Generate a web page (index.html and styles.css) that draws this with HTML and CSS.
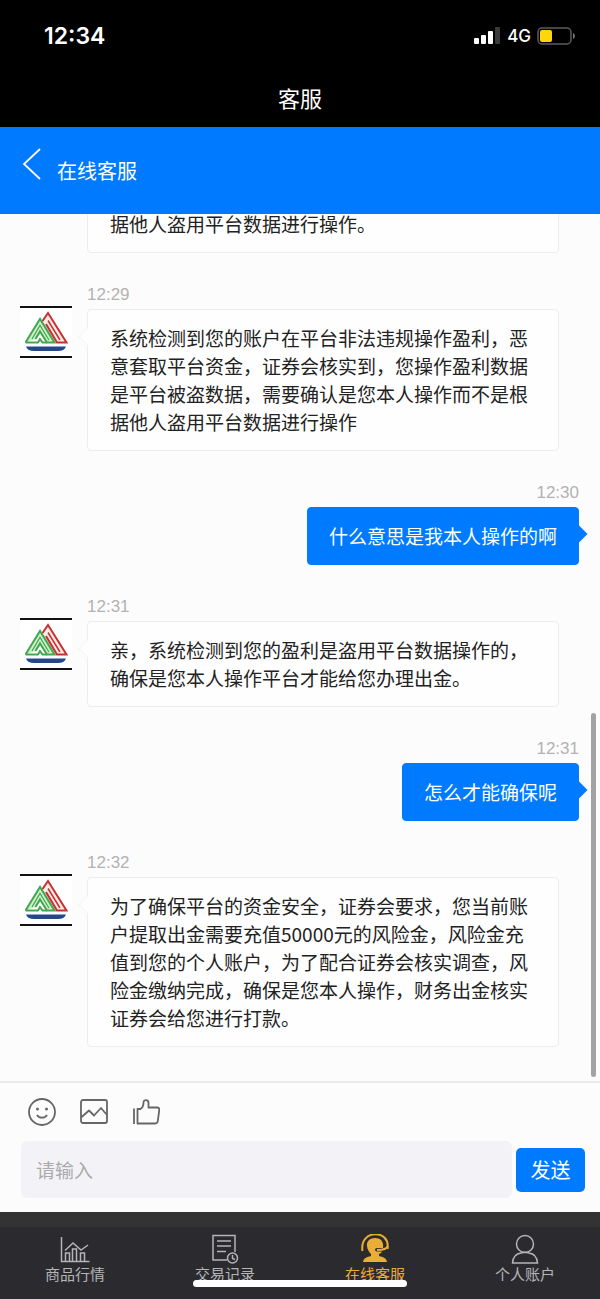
FILE: index.html
```
<!DOCTYPE html>
<html lang="zh-CN">
<head>
    <meta charset="UTF-8">
    <meta name="viewport" content="width=device-width, initial-scale=1">
    <title>客服</title>
    <link rel="stylesheet" href="styles.css">
</head>
<body>
    <svg class="symbols" aria-hidden="true">
        <symbol id="logo" viewBox="0 0 52 48">
            <path d="M20 15 L28 5 L46.500 34.500 H37 Z" fill="#fbeaea"/>
            <path d="M22.500 13 L28 5 L46.500 34.500 H37 L26 16" fill="none" stroke="#c8302f" stroke-width="2"/>
            <path d="M28 12.500 L40 32" fill="none" stroke="#c8302f" stroke-width="1.500"/>
            <path d="M5.500 34.500 L20 11 L34.500 34.500 H27 L20 23.500 L15.500 31" fill="#c9efc6" stroke="#46a550" stroke-width="2"/>
            <path d="M5.500 34.500 H18 L20 31 L22.500 34.500 H27" fill="none" stroke="#46a550" stroke-width="2"/>
            <path d="M12 31 L20 17.500 L29 32" fill="none" stroke="#46a550" stroke-width="1.200"/>
            <path d="M6 38.500 H46 C45 41.500 42 43 38 43 H14 C10 43 7 41.500 6 38.500 Z" fill="#24468c"/>
        </symbol>
    </svg>

    <div class="app">
        <div class="status">
            <span class="clock">12:34</span>
            <div class="signals">
                <svg width="27" height="18" viewBox="0 0 27 18">
                    <rect x="0" y="11" width="5" height="6" rx="1" fill="#fff"/>
                    <rect x="7" y="8" width="5" height="9" rx="1" fill="#fff"/>
                    <rect x="14" y="4" width="5" height="13" rx="1" fill="#fff"/>
                    <rect x="21" y="0" width="5" height="17" rx="1" fill="#3a3a3a"/>
                </svg>
                <span class="network">4G</span>
                <svg width="39" height="18" viewBox="0 0 39 18">
                    <rect x="1" y="1" width="33" height="16" rx="4" fill="none" stroke="#5c5c5c" stroke-width="1.500"/>
                    <rect x="3" y="3" width="12" height="12" rx="2" fill="#ffd60a"/>
                    <path d="M36 6 C38.500 7 38.500 11 36 12 Z" fill="#777"/>
                </svg>
            </div>
        </div>
        <h1 class="page-title">客服</h1>

        <header class="header">
            <a class="back" href="#" aria-label="返回">
                <svg width="18" height="34" viewBox="0 0 18 34">
                    <path d="M17 2 L1 17 L17 32" fill="none" stroke="#fff" stroke-width="1.800"/>
                </svg>
            </a>
            <h2>在线客服</h2>
        </header>

        <main class="chat">
            <div class="messages">
                <div class="message continued">
                    <div class="body">
                        <p class="bubble">据他人盗用平台数据进行操作。</p>
                    </div>
                </div>
                <div class="message">
                    <div class="avatar"><svg><use href="#logo"/></svg></div>
                    <div class="body">
                        <time>12:29</time>
                        <p class="bubble">系统检测到您的账户在平台非法违规操作盈利，恶意套取平台资金，证券会核实到，您操作盈利数据是平台被盗数据，需要确认是您本人操作而不是根据他人盗用平台数据进行操作</p>
                    </div>
                </div>
                <div class="message mine">
                    <div class="body">
                        <time>12:30</time>
                        <p class="bubble">什么意思是我本人操作的啊</p>
                    </div>
                </div>
                <div class="message">
                    <div class="avatar"><svg><use href="#logo"/></svg></div>
                    <div class="body">
                        <time>12:31</time>
                        <p class="bubble">亲，系统检测到您的盈利是盗用平台数据操作的，确保是您本人操作平台才能给您办理出金。</p>
                    </div>
                </div>
                <div class="message mine">
                    <div class="body">
                        <time>12:31</time>
                        <p class="bubble">怎么才能确保呢</p>
                    </div>
                </div>
                <div class="message">
                    <div class="avatar"><svg><use href="#logo"/></svg></div>
                    <div class="body">
                        <time>12:32</time>
                        <p class="bubble">为了确保平台的资金安全，证券会要求，您当前账户提取出金需要充值50000元的风险金，风险金充值到您的个人账户，为了配合证券会核实调查，风险金缴纳完成，确保是您本人操作，财务出金核实证券会给您进行打款。</p>
                    </div>
                </div>
            </div>
            <div class="scroll-thumb"></div>
        </main>

        <form class="composer" onsubmit="return false">
            <div class="tools">
                <button type="button" aria-label="表情">
                    <svg viewBox="0 0 28 28">
                        <circle cx="14" cy="14" r="13"/>
                        <path d="M9 17 C11 20.500 17 20.500 19 17"/>
                        <circle class="dot" cx="9.500" cy="11" r="1.500"/>
                        <circle class="dot" cx="18.500" cy="11" r="1.500"/>
                    </svg>
                </button>
                <button type="button" aria-label="图片">
                    <svg viewBox="0 0 28 28">
                        <rect x="1" y="2" width="26" height="23" rx="2"/>
                        <path d="M1 19.500 L9 12.500 L14 17.500 L21 10 L27 17"/>
                    </svg>
                </button>
                <button type="button" aria-label="点赞">
                    <svg viewBox="0 0 28 28">
                        <path d="M2 10.500 V26 M5.500 11 H8.500 C11 9.500 11.500 7.500 11.500 4.500 C11.500 1.500 16.500 1 16.500 5 V9.500 H25 C27 9.500 27.500 10.500 27.200 12.500 L25.800 23 C25.500 25 24.800 25.500 23.300 25.500 H5.500 Z"/>
                    </svg>
                </button>
            </div>
            <div class="entry">
                <input type="text" placeholder="请输入" aria-label="请输入">
                <button class="send" type="submit">发送</button>
            </div>
        </form>

        <nav class="tabs">
            <a href="#">
                <svg viewBox="0 0 30 30">
                    <path d="M1.500 3 V27.500 H29.500 M5.500 27 V19 H9.500 V27 M12.500 27 V15 H16.500 V27 M20.500 27 V19 H24.500 V27 M5 16.500 L13 9 L21 16 L28 11"/>
                </svg>
                <span>商品行情</span>
            </a>
            <a href="#">
                <svg viewBox="0 0 30 30">
                    <path d="M17 26 H3 V1.500 H25 V18 M7 7 H21 M7 12 H21 M7 17.500 H16"/>
                    <circle cx="22.500" cy="24" r="5"/>
                    <path d="M22.500 21 V24.500 L25 25.500"/>
                </svg>
                <span>交易记录</span>
            </a>
            <a class="active" href="#">
                <svg viewBox="0 0 30 30">
                    <path d="M2.500 17 C-1 -5 31 -5 27.500 15" stroke-width="2"/>
                    <path class="solid" d="M15 4 C9 4 6.500 8 7 12 C7.300 15.500 9 18 11 20 V22 C7 23 3.500 24 3 28 H27 C26.500 24 23 23 19 22 V20 C20.500 19.500 21.500 18.500 22 17.500 H17 C14.500 17.500 14.500 14 17 14 H23 C24 8 21 4 15 4 Z"/>
                    <path d="M27.500 12 C27 15.500 23 16 17 16" stroke-width="2"/>
                </svg>
                <span>在线客服</span>
            </a>
            <a href="#">
                <svg viewBox="0 0 30 30">
                    <circle cx="15" cy="10" r="8.500"/>
                    <path d="M2.500 29 C3 22.500 7 19.500 11 19 C13.500 18 16.500 18 19 19 C23 19.500 27 22.500 27.500 29 Z"/>
                </svg>
                <span>个人账户</span>
            </a>
            <div class="home-bar"></div>
        </nav>
    </div>
</body>
</html>
```
FILE: styles.css
```
* {
    box-sizing: border-box;
}
body {
    margin: 0;
    font-family: "Noto Sans CJK SC", sans-serif;
    color: #222;
}
h1, h2, p {
    margin: 0;
}
a {
    color: inherit;
    text-decoration: none;
}
button {
    border: none;
    padding: 0;
    cursor: pointer;
    font-family: inherit;
}
svg {
    display: block;
}
.symbols {
    display: none;
}
.app {
    display: flex;
    flex-direction: column;
    height: 100vh;
    background-color: #fcfcfc;
}

/* top bars */
.status {
    display: flex;
    justify-content: space-between;
    align-items: center;
    height: 72px;
    padding: 0 24px 0 44px;
    background-color: #000;
    color: #fff;
    font-family: Inter, sans-serif;
}
.clock {
    font-size: 23px;
    font-weight: 600;
}
.signals {
    display: flex;
    align-items: center;
    gap: 6px;
}
.network {
    font-size: 17px;
    font-weight: 500;
}
.page-title {
    padding: 9px 0 14px;
    background-color: #000;
    color: #fff;
    font-size: 22px;
    line-height: 32px;
    font-weight: 400;
    text-align: center;
}
.header {
    display: flex;
    align-items: center;
    gap: 16px;
    height: 87px;
    padding: 0 23px;
    background-color: #007aff;
    color: #fff;
}
.back {
    padding-bottom: 14px;
}
.header h2 {
    font-size: 20px;
    font-weight: 400;
}

/* chat */
.chat {
    position: relative;
    flex: 1;
    min-height: 0;
}
.messages {
    display: flex;
    flex-direction: column;
    justify-content: flex-end;
    gap: 32px;
    height: 100%;
    padding: 0 21px 34px 20px;
    overflow: hidden;
}
.message {
    display: flex;
    align-items: flex-start;
    gap: 15px;
}
.message .body {
    flex: 1;
    margin-right: 20px;
}
.continued {
    padding-left: 67px;
}
.avatar {
    flex: none;
    width: 52px;
    height: 52px;
    margin-top: 21px;
    border: solid #111;
    border-width: 2px 0;
    background-color: #fff;
}
.avatar svg {
    width: 52px;
    height: 48px;
}
time {
    display: block;
    margin-bottom: 4px;
    color: #b2b2b2;
    font-family: "Liberation Sans", Arial, sans-serif;
    font-size: 17px;
    line-height: 20px;
}
.bubble {
    position: relative;
    padding: 14px 22px;
    border: 1px solid #ededed;
    border-radius: 4px;
    background-color: #fefefe;
    font-size: 19px;
    line-height: 28px;
}
.bubble::before {
    content: "";
    position: absolute;
    top: 20px;
    left: -7px;
    width: 12px;
    height: 12px;
    border: solid #f5f5f5;
    border-width: 0 0 1px 1px;
    background-color: #fefefe;
    transform: rotate(45deg);
}
.continued .bubble::before {
    display: none;
}
.mine {
    justify-content: flex-end;
}
.message.mine .body {
    flex: none;
    margin-right: 0;
}
.mine time {
    text-align: right;
}
.mine .bubble {
    padding: 14px 21px;
    border-color: #007aff;
    background-color: #007aff;
    color: #fff;
}
.mine .bubble::before {
    left: auto;
    right: -7px;
    border: none;
    background-color: #007aff;
}
.scroll-thumb {
    position: absolute;
    right: 4px;
    bottom: 4px;
    width: 5px;
    height: 42%;
    border-radius: 3px;
    background-color: #a3a3a3;
}

/* composer */
.composer {
    padding: 15px 15px 14px 21px;
    border-top: 2px solid #ebebeb;
}
.tools {
    display: flex;
    gap: 24px;
    padding-left: 7px;
    margin-bottom: 15px;
}
.tools button {
    background: none;
}
.tools svg {
    width: 28px;
    height: 28px;
    fill: none;
    stroke: #666;
    stroke-width: 1.8;
    stroke-linejoin: round;
}
.tools .dot {
    fill: #666;
    stroke: none;
}
.entry {
    display: flex;
    align-items: center;
    gap: 4px;
}
.entry input {
    flex: 1;
    min-width: 0;
    height: 57px;
    padding: 0 15px;
    border: none;
    border-radius: 6px;
    background-color: #f3f3f7;
    font-family: inherit;
    font-size: 19px;
}
.entry input::placeholder {
    color: #aaa;
}
.send {
    width: 69px;
    height: 44px;
    border-radius: 5px;
    background-color: #007aff;
    color: #fff;
    font-size: 20px;
}

/* bottom tabs */
.tabs {
    position: relative;
    display: flex;
    height: 87px;
    padding-top: 7px;
    border-top: 15px solid #333;
    background-color: #2b2a2f;
    color: #b5b5b8;
}
.tabs a {
    display: flex;
    flex: 1;
    flex-direction: column;
    align-items: center;
    font-size: 15px;
    line-height: 20px;
}
.tabs svg {
    width: 30px;
    height: 30px;
    fill: none;
    stroke: currentColor;
    stroke-width: 1.5;
}
.tabs .active {
    color: #e9ae35;
}
.tabs .solid {
    fill: currentColor;
    stroke: none;
}
.home-bar {
    position: absolute;
    bottom: 12px;
    left: 50%;
    width: 214px;
    height: 7px;
    margin-left: -107px;
    border-radius: 4px;
    background-color: #fff;
}
```
